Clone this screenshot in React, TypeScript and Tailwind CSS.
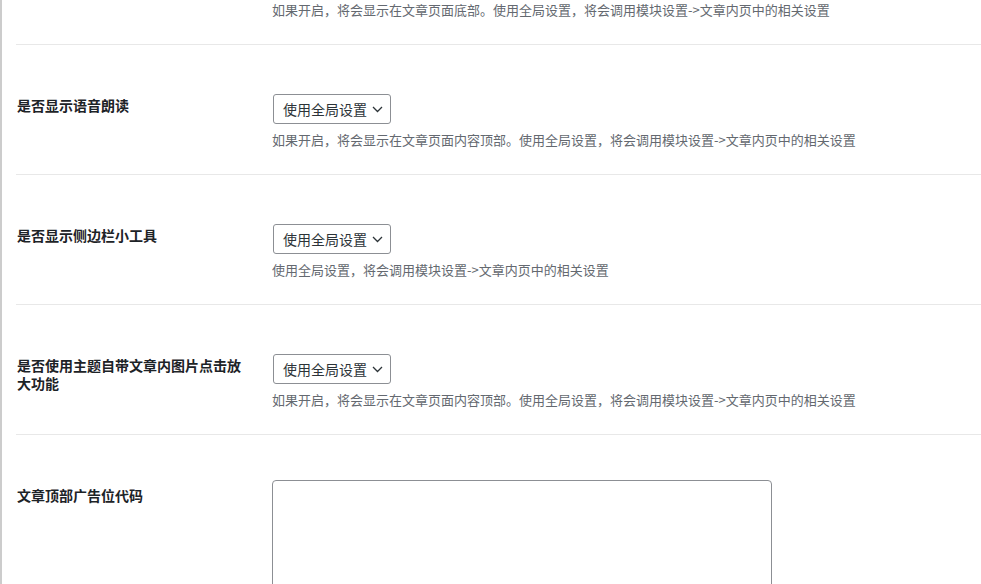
import React from "react";

const font = { fontFamily: '"Noto Sans CJK SC", "Noto Sans", sans-serif' };

function Chevron() {
  return (
    <svg width="11" height="7" viewBox="0 0 11 7" className="ml-[5px] mt-[1px]">
      <path d="M1 1 L5.5 5.5 L10 1" fill="none" stroke="#2c3338" strokeWidth="1.3" />
    </svg>
  );
}

function SelectBox() {
  return (
    <div className="inline-flex items-center h-[30px] border border-[#8c8f94] rounded-[3px] pl-[9px] pr-[7px] ml-[1px] text-[14px] text-[#2c3338] bg-white leading-none">
      <span>使用全局设置</span>
      <Chevron />
    </div>
  );
}

const descA = "如果开启，将会显示在文章页面内容顶部。使用全局设置，将会调用模块设置->文章内页中的相关设置";

function Row({ label, desc }: { label: string; desc: string }) {
  return (
    <div className="flex items-start border-t border-[#e8e8e8] pt-[49px] pb-[24px]">
      <div className="w-[256px] pr-[24px] pl-[1px] mt-[2px] text-[14px] leading-[18px] font-semibold text-[#1d2327]">
        {label}
      </div>
      <div className="flex flex-col items-start">
        <SelectBox />
        <div className="mt-[6px] text-[13px] leading-[20px] text-[#646970]">{desc}</div>
      </div>
    </div>
  );
}

export default function App() {
  return (
    <div className="w-[981px] h-[584px] overflow-hidden bg-white border-l-2 border-[#cccccc]" style={font}>
      <div className="ml-[14px]">
        <div className="pt-0 pb-[24px] pl-[256px] text-[13px] leading-[20px] text-[#646970]">
          如果开启，将会显示在文章页面底部。使用全局设置，将会调用模块设置-&gt;文章内页中的相关设置
        </div>
        <Row label="是否显示语音朗读" desc={descA} />
        <Row label="是否显示侧边栏小工具" desc="使用全局设置，将会调用模块设置->文章内页中的相关设置" />
        <Row label="是否使用主题自带文章内图片点击放大功能" desc={descA} />
        <div className="flex items-start border-t border-[#e8e8e8] pt-[45px]">
          <div className="w-[256px] pr-[24px] pl-[1px] mt-[6px] text-[14px] leading-[18px] font-semibold text-[#1d2327]">
            文章顶部广告位代码
          </div>
          <div className="w-[500px] h-[160px] border border-[#8c8f94] rounded-[4px] bg-white"></div>
        </div>
      </div>
    </div>
  );
}
